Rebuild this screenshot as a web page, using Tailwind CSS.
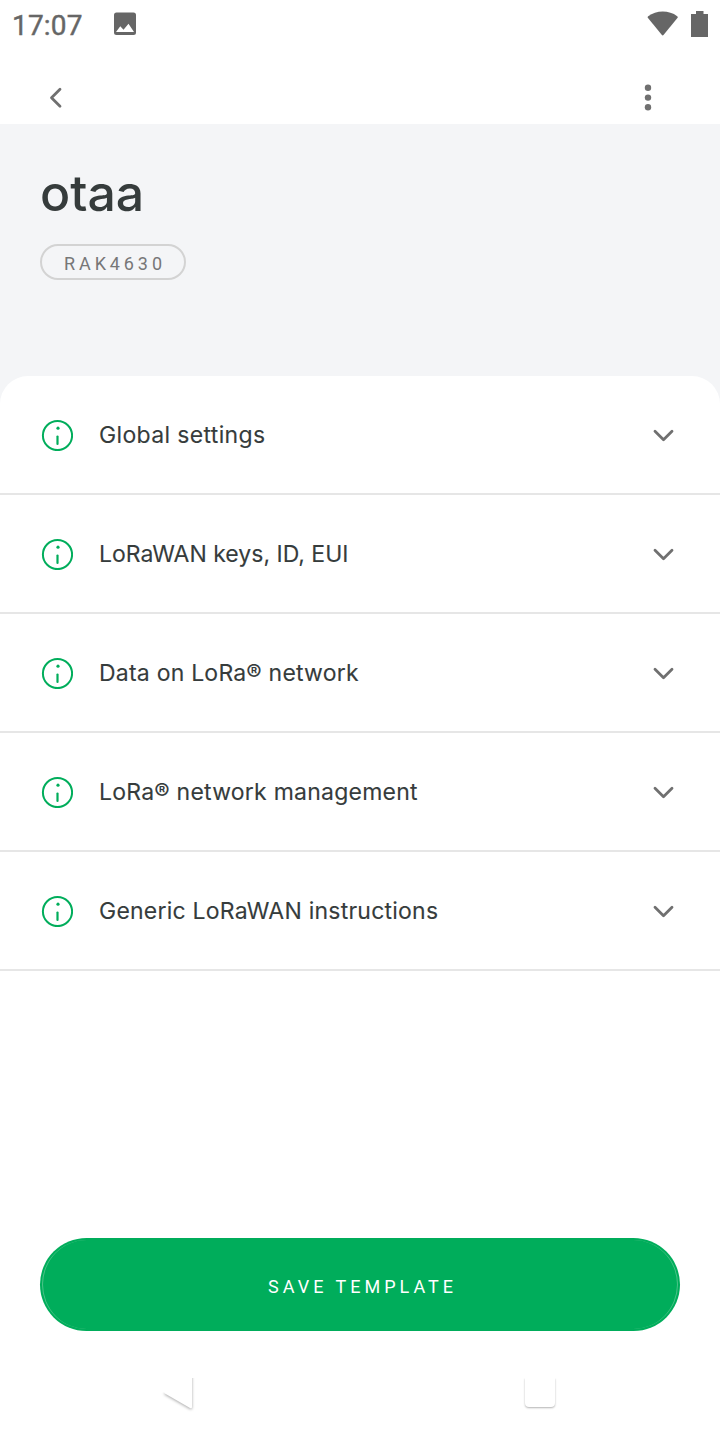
<!DOCTYPE html>
<html lang="en">
<head>
<meta charset="utf-8">
<title>otaa</title>
<script src="https://cdn.jsdelivr.net/npm/@tailwindcss/browser@4"></script>
</head>
<body class="bg-white">
<svg class="hidden">
  <symbol id="info" viewBox="0 0 32 32"><circle cx="16.500" cy="16.500" r="14.600" fill="none" stroke="#00ad5b" stroke-width="2"/><circle cx="17" cy="9.200" r="1.600" fill="#00ad5b"/><path d="M16.500 17.500v7.500" stroke="#00ad5b" stroke-width="2.200" stroke-linecap="round"/></symbol>
  <symbol id="down" viewBox="0 0 24 16"><path d="M3 4.300l8.500 8.500L20 4.300" fill="none" stroke="#707070" stroke-width="2.800" stroke-linecap="round" stroke-linejoin="round"/></symbol>
</svg>
<div class="flex h-[1440px] w-[720px] flex-col overflow-hidden bg-white font-['Inter',sans-serif] text-[#363c3c]">
  <div class="flex h-12 shrink-0 items-start">
    <span class="ml-3 mt-[10px] w-[100px] font-['Roboto',sans-serif] text-[28px] leading-8 tracking-[0.200px] text-[#666] [-webkit-text-stroke:0.400px_#666]">17:07</span>
    <svg class="ml-px mt-3 h-6 w-6" viewBox="0 0 24 24"><path fill="#666" fill-rule="evenodd" d="M3.500.5h17a2.500 2.500 0 0 1 2.500 2.500v17.500a2.500 2.500 0 0 1-2.500 2.500h-17A2.500 2.500 0 0 1 1 20.500V3A2.500 2.500 0 0 1 3.500.5zM3 20h18l-5.500-8.200-5 6-3.200-3.500z"/></svg>
    <svg class="ml-auto mt-[10px] h-7 w-8" viewBox="0 0 32 28"><path fill="#666" d="M1.200 6.300C9 .2 22-.1 30.200 6.300q1 .8.200 1.800L16.700 24.800q-1 1.200-2 0L1 8.100q-.8-1 .2-1.800z"/></svg>
    <svg class="ml-3 mr-3 mt-[11px] h-[26px] w-[17px]" viewBox="0 0 17 26"><path fill="#666" d="M5 0h7.500v3H17v23H0V3h5z"/></svg>
  </div>
  <div class="flex h-[76px] shrink-0 items-start justify-between px-10">
    <svg class="mt-[34px] h-8 w-8" viewBox="0 0 32 32"><path d="M20 7.200l-8.500 8.500 8.500 8.500" fill="none" stroke="#707070" stroke-width="2.800" stroke-linecap="round" stroke-linejoin="round"/></svg>
    <svg class="mr-4 mt-[34px] h-8 w-8" viewBox="0 0 32 32" fill="#707070"><circle cx="16" cy="5.800" r="3.200"/><circle cx="16" cy="15.600" r="3.200"/><circle cx="16" cy="25.300" r="3.200"/></svg>
  </div>
  <div class="bg-[#f4f5f7]">
    <div class="flex h-[252px] flex-col items-start px-10">
      <h1 class="mt-[39px] text-[50px] font-medium leading-[60px]">otaa</h1>
      <div class="mt-[21px] flex h-9 w-[146px] items-center rounded-full border-2 border-[#d3d3d3] pl-[22px] pt-1 font-['Roboto',sans-serif] text-[18px] leading-none tracking-[3.900px] text-[#777]">RAK4630</div>
    </div>
    <div class="rounded-t-[28px] bg-white [-webkit-text-stroke:0.100px_#363c3c]">
      <div class="flex h-[119px] items-center border-b-2 border-[#e6e6e6] pl-[41px] pr-11"><svg class="mt-px h-8 w-8"><use href="#info"/></svg><span class="ml-[26px] mt-0.5 text-[23px] tracking-[0.350px]">Global settings</span><svg class="ml-auto h-4 w-6"><use href="#down"/></svg></div>
      <div class="flex h-[119px] items-center border-b-2 border-[#e6e6e6] pl-[41px] pr-11"><svg class="mt-px h-8 w-8"><use href="#info"/></svg><span class="ml-[26px] mt-0.5 text-[23px]">LoRaWAN keys, ID, EUI</span><svg class="ml-auto h-4 w-6"><use href="#down"/></svg></div>
      <div class="flex h-[119px] items-center border-b-2 border-[#e6e6e6] pl-[41px] pr-11"><svg class="mt-px h-8 w-8"><use href="#info"/></svg><span class="ml-[26px] mt-0.5 text-[23px] tracking-[0.220px]">Data on LoRa® network</span><svg class="ml-auto h-4 w-6"><use href="#down"/></svg></div>
      <div class="flex h-[119px] items-center border-b-2 border-[#e6e6e6] pl-[41px] pr-11"><svg class="mt-px h-8 w-8"><use href="#info"/></svg><span class="ml-[26px] mt-0.5 text-[23px] tracking-[0.240px]">LoRa® network management</span><svg class="ml-auto h-4 w-6"><use href="#down"/></svg></div>
      <div class="flex h-[119px] items-center border-b-2 border-[#e6e6e6] pl-[41px] pr-11"><svg class="mt-px h-8 w-8"><use href="#info"/></svg><span class="ml-[26px] mt-0.5 text-[23px] tracking-[0.230px]">Generic LoRaWAN instructions</span><svg class="ml-auto h-4 w-6"><use href="#down"/></svg></div>
    </div>
  </div>
  <div class="mx-10 mt-[267px] h-[93px] shrink-0 rounded-full bg-[#00ad5b] p-[2px]">
    <button class="flex h-full w-full items-center justify-center rounded-full border-x border-[#4cc389] bg-[#00ad5b] pl-[5px] pt-[3px] font-['Roboto',sans-serif] text-[18px] tracking-[4px] text-white">SAVE TEMPLATE</button>
  </div>
  <div class="mt-[47px] flex h-[62px] justify-between overflow-hidden pl-[160px] pr-[160px]">
    <svg class="h-9 w-9" viewBox="0 0 36 36"><path class="drop-shadow-[0_1px_1.500px_rgba(0,0,0,0.35)]" d="M32-15v44q0 2-2 1L4 15z" fill="#fff"/><path d="M0 0h31v22L4 14.500 0 14z" fill="#fff"/></svg>
    <div class="mr-[5px] h-[29px] w-[30px] rounded-b-[4px] bg-white shadow-[0_1px_2px_rgba(0,0,0,0.3)]"></div>
  </div>
</div>
</body>
</html>
